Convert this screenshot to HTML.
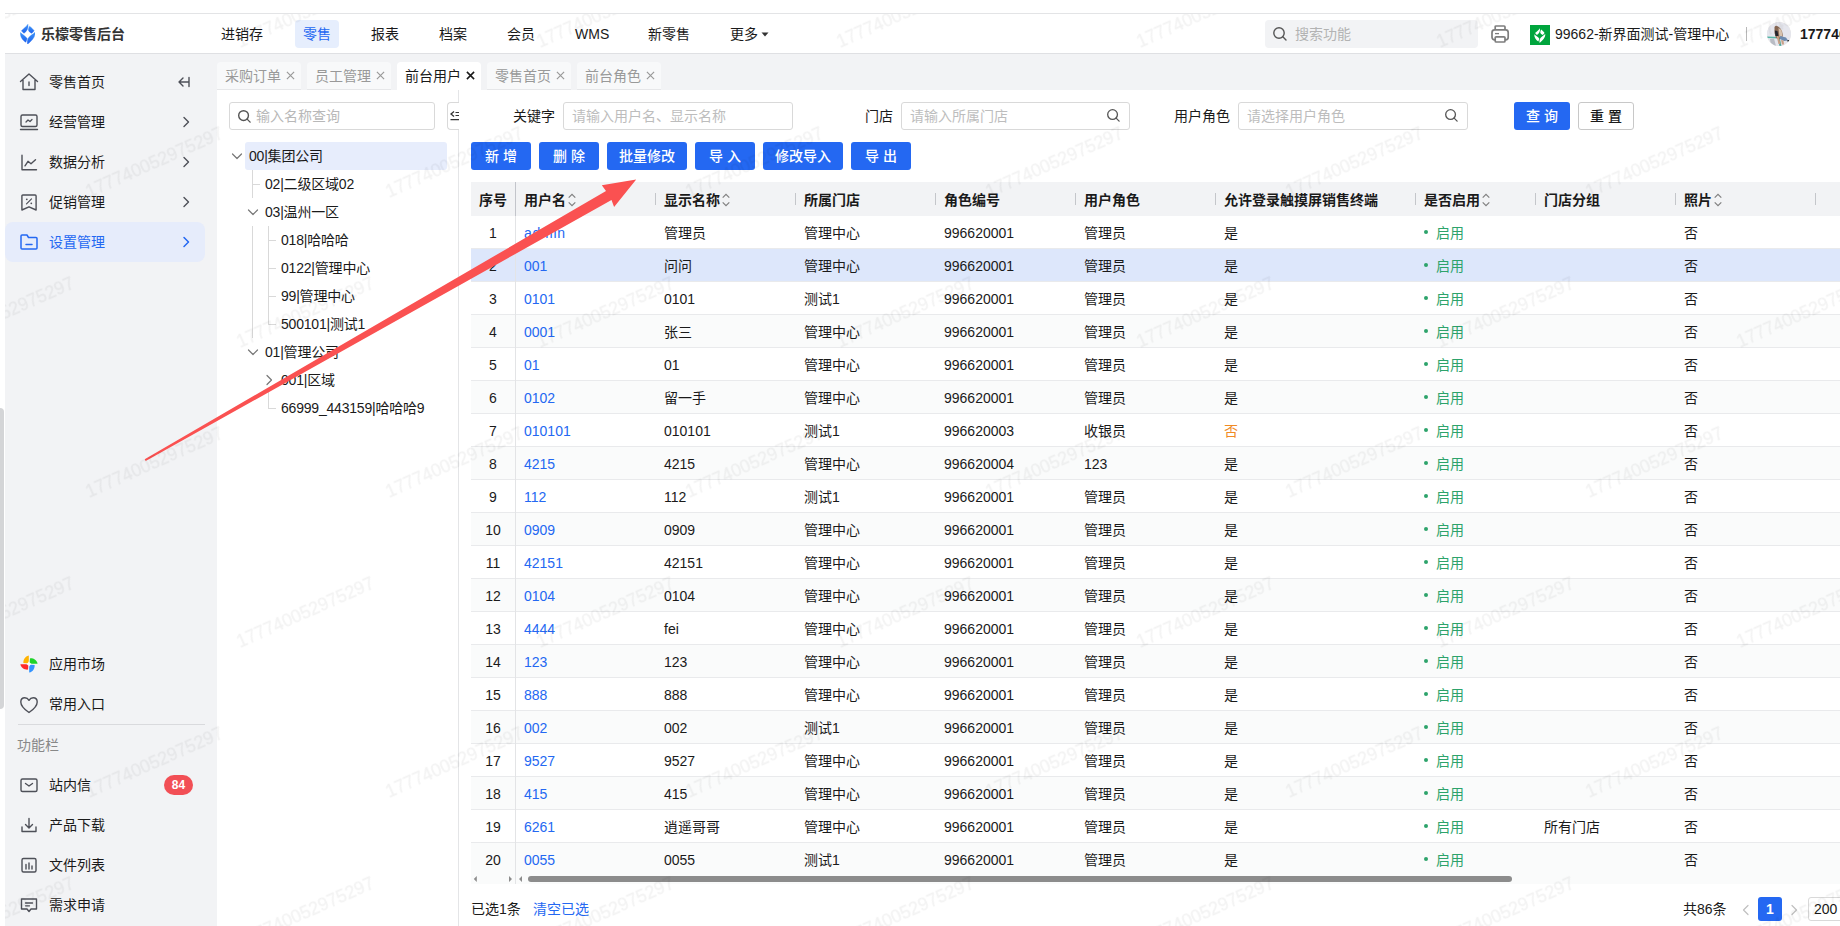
<!DOCTYPE html>
<html lang="zh-CN">
<head>
<meta charset="utf-8">
<title>乐檬零售后台</title>
<style>
*{box-sizing:border-box;margin:0;padding:0}
html,body{width:1840px;height:926px;overflow:hidden;background:#fff}
body{font-family:"Liberation Sans","Noto Sans CJK SC",sans-serif;font-size:14px;color:#1a1a1a;position:relative}
.abs{position:absolute}
svg{display:block}
/* top strip */
#topline{position:absolute;left:5px;top:13px;width:1835px;height:1px;background:#e3e4e6}
/* header */
#header{position:absolute;left:5px;top:14px;width:1835px;height:40px;background:#fff;border-bottom:1px solid #dfe0e3}
#logo{position:absolute;left:14.700px;top:9.800px}
#brand{position:absolute;left:36px;top:0;line-height:41px;font-size:14px;font-weight:700;color:#333;letter-spacing:0px}
.nav{position:absolute;top:0;line-height:41px;font-size:14px;color:#1a1a1a;white-space:nowrap}
.nav.act{top:6px;height:28px;line-height:29px;background:#e6eefd;color:#2468f2;border-radius:4px;padding:0 8px}
#hsearch{position:absolute;left:1260px;top:6px;width:213px;height:28px;background:#f2f3f5;border-radius:4px;line-height:29px;color:#b3b3b3;font-size:14px;padding-left:30px}
#hsearch svg{position:absolute;left:7px;top:6px}
#org{position:absolute;left:1550px;top:0;line-height:41px;font-size:14px;color:#1a1a1a;white-space:nowrap}
#orgico{position:absolute;left:1525px;top:11px;width:20px;height:20px;background:#00a53d}
#hdiv{position:absolute;left:1741px;top:13px;width:1px;height:14px;background:#b8b8b8}
#avatar{position:absolute;left:1762px;top:8px;width:24px;height:24px;border-radius:50%;overflow:hidden;background:#e9e3dc}
#uname{position:absolute;left:1795px;top:0;line-height:41px;font-size:14px;font-weight:700;color:#1a1a1a;white-space:nowrap}
/* sidebar */
#side{position:absolute;left:5px;top:54px;width:212px;height:872px;background:#f2f3f5}
.mi{position:absolute;left:0;width:200px;height:40px;line-height:41px;font-size:14px;color:#1a1a1a;padding-left:44px;white-space:nowrap}
.mi svg.ic{position:absolute;left:14px;top:10px}
.mi svg.chev{position:absolute;left:175px;top:14px}
.mi.act{background:#e6ecfb;border-radius:8px;color:#2468f2}
#sdiv{position:absolute;left:13px;top:670px;width:187px;height:1px;background:#d9dadd}
#sfn{position:absolute;left:12px;top:680px;font-size:14px;color:#888;line-height:22px}
#badge{position:absolute;left:159px;top:721px;width:29px;height:20px;border-radius:10px;background:#f24f55;color:#fff;font-size:12px;line-height:21px;text-align:center;font-weight:700}
#edgebar{position:absolute;left:0;top:408px;width:4px;height:301px;background:#d4d5d7;border-radius:0 4px 4px 0}
/* tabs */
#tabbar{position:absolute;left:217px;top:54px;width:1623px;height:36px;background:#f2f3f5}
.tab{position:absolute;top:8px;height:28px;width:84px;line-height:29px;font-size:14px;color:#999;background:#f8f9fa;border-radius:4px 4px 0 0;padding-left:8px;white-space:nowrap;border-bottom:1px solid #e6e7e9}
.tab.act{background:#fff;color:#1a1a1a;border-bottom:none}
.tab.act .x path{stroke-width:1.700}
.tab .x{position:absolute;left:68.500px;top:9px}
/* tree panel */
#tree{position:absolute;left:217px;top:90px;width:241px;height:836px;background:#fff}
#tsearch{position:absolute;left:12px;top:12px;width:206px;height:28px;border:1px solid #d9d9d9;border-radius:3px;line-height:26px;padding-left:26px;color:#b8b8b8;font-size:14px}
#tsearch svg{position:absolute;left:7px;top:6px}
#split{position:absolute;left:458px;top:90px;width:1px;height:836px;background:#e4e5e7}
#collapse{position:absolute;left:447px;top:102px;width:12px;height:28px;background:#fff;border:1px solid #d9d9d9;border-right:none;border-radius:4px 0 0 4px;overflow:hidden}
.tn{position:absolute;height:28px;line-height:29px;font-size:14px;color:#1a1a1a;white-space:nowrap;letter-spacing:-0.2px}
.tn.sel{background:#e7edfc;border-radius:3px}
.tl{position:absolute;background:#d9d9d9}
/* filters */
.flabel{position:absolute;top:102px;line-height:28px;font-size:14px;color:#1a1a1a;white-space:nowrap}
.finput{position:absolute;top:102px;height:28px;border:1px solid #d9d9d9;border-radius:3px;line-height:26px;padding-left:8px;color:#bdbdbd;font-size:14px;white-space:nowrap;background:#fff}
.finput svg{position:absolute;right:8px;top:5px}
.btn{position:absolute;height:28px;line-height:29px;border-radius:3px;background:#2468f2;color:#fff;font-size:14px;text-align:center;white-space:nowrap;font-weight:500}
.btn.plain{background:#fff;border:1px solid #c8c8c8;color:#1a1a1a;line-height:27px}
/* table */
#tbl{position:absolute;left:471px;top:182px;width:1369px;height:702px;overflow:hidden}
.thead{position:absolute;left:0;top:0;width:1369px;height:34px;background:#f2f3f5}
.th{position:absolute;top:0;height:34px;line-height:36px;font-weight:700;font-size:14px;color:#1a1a1a;padding-left:8px;white-space:nowrap}
.th .sep{position:absolute;left:-1px;top:11px;width:1px;height:12px;background:#c4c6ca}
.th .sort{display:inline-block;vertical-align:-2px;margin-left:2px}
.tr{position:absolute;left:0;width:1369px;height:33px;border-bottom:1px solid #e9eaec;background:#fff}
.tr.odd{background:#fafbfb}
.tr.sel{background:#dde7fb}
.td{position:absolute;top:0;height:32px;line-height:34px;font-size:14px;padding-left:8px;white-space:nowrap;color:#1a1a1a}
.td.idx{left:0;width:44px;text-align:center;padding:0}
.lnk{color:#2468f2}
.no{color:#f08a24}
.on{color:#2da36b}
.on b{display:inline-block;width:4px;height:4px;border-radius:50%;background:#2da36b;vertical-align:4px;margin-right:8px}
#idxline{position:absolute;left:515px;top:216px;width:1px;height:668px;background:#e3e4e6}
#idxline2{position:absolute;left:515px;top:182px;width:1px;height:34px;background:#c3c5cb}
/* scrollbar */
#sb{position:absolute;left:528px;top:876px;width:984px;height:6px;border-radius:3px;background:#8c8c8c}
/* footer */
.ft{position:absolute;top:897px;line-height:25px;font-size:14px;white-space:nowrap;color:#1a1a1a}
#pg1{position:absolute;left:1758px;top:897px;width:24px;height:24px;border-radius:3px;background:#2468f2;color:#fff;text-align:center;line-height:25px;font-size:14px;font-weight:700}
#pgsize{position:absolute;left:1808px;top:897px;width:60px;height:24px;border:1px solid #d9d9d9;border-radius:3px;line-height:23px;padding-left:5px;font-size:14px}
.wm{position:absolute;font-size:16px;color:rgba(0,0,0,0.06);transform:rotate(-30deg);transform-origin:left bottom;white-space:nowrap;pointer-events:none;letter-spacing:0.5px}
</style>
</head>
<body>
<div id="topline"></div>

<!-- HEADER -->
<div id="header">
  <svg id="logo" width="15.560" height="20.230" viewBox="250 200 400 520"><defs><linearGradient id="lg" x1="0" y1="0" x2="0" y2="1"><stop offset="0" stop-color="#3d92f6"/><stop offset="1" stop-color="#1c62ef"/></linearGradient></defs><g fill="url(#lg)" stroke="url(#lg)" stroke-width="10" stroke-linejoin="round"><path d="M455 205 C470 300 430 390 350 440 L285 375 C340 320 420 260 455 205Z"/><path d="M495 255 C540 290 590 335 615 375 L555 440 C510 420 470 390 465 345 C470 310 485 280 495 255Z"/><path d="M260 420 C320 480 400 520 435 575 L400 670 C320 620 250 530 260 420Z"/><path d="M640 410 C650 540 540 640 445 720 C430 650 440 590 480 540 C530 490 600 450 640 410Z"/></g></svg>
  <div id="brand">乐檬零售后台</div>
  <div class="nav" style="left:216px">进销存</div>
  <div class="nav act" style="left:290px">零售</div>
  <div class="nav" style="left:366px">报表</div>
  <div class="nav" style="left:434px">档案</div>
  <div class="nav" style="left:502px">会员</div>
  <div class="nav" style="left:570px">WMS</div>
  <div class="nav" style="left:643px">新零售</div>
  <div class="nav" style="left:725px">更多<svg style="display:inline-block;margin-left:3px;vertical-align:2.500px" width="8" height="5" viewBox="0 0 8 5"><path d="M0.500 0.500 L7.500 0.500 L4 4.500Z" fill="#333"/></svg></div>
  <div id="hsearch"><svg width="16" height="16" viewBox="0 0 16 16"><circle cx="7" cy="7" r="5.2" fill="none" stroke="#555" stroke-width="1.4"/><path d="M10.8 10.8 L14 14" stroke="#555" stroke-width="1.4" stroke-linecap="round"/></svg>搜索功能</div>
  <svg class="abs" style="left:1485px;top:10px" width="20" height="20" viewBox="0 0 20 20"><g fill="none" stroke="#7d7d7d" stroke-width="1.700" stroke-linejoin="round"><path d="M5.200 5.800 L5.200 2.900 Q5.200 2 6.100 2 L14.100 2 Q15 2 15 2.900 L15 5.800"/><rect x="2" y="5.800" width="16.200" height="10" rx="2.600"/><rect x="5.200" y="12.800" width="9.800" height="5.200" rx="1" fill="#fff"/><path d="M5 9.600 L9 9.600" stroke-width="1.300"/></g></svg>
  <div id="orgico"><svg style="position:absolute;left:4.200px;top:2.700px" width="11.600" height="15" viewBox="250 200 400 520"><g fill="#fff"><path d="M455 205 C470 300 430 390 350 440 L285 375 C340 320 420 260 455 205Z"/><path d="M495 255 C540 290 590 335 615 375 L555 440 C510 420 470 390 465 345 C470 310 485 280 495 255Z"/><path d="M260 420 C320 480 400 520 435 575 L400 670 C320 620 250 530 260 420Z"/><path d="M640 410 C650 540 540 640 445 720 C430 650 440 590 480 540 C530 490 600 450 640 410Z"/></g></svg></div>
  <div id="org">99662-新界面测试-管理中心</div>
  <div id="hdiv"></div>
  <div id="avatar"><svg width="24" height="24" viewBox="0 0 24 24"><rect width="24" height="24" fill="#e5e6ed"/><path d="M0 14.500 L12 15 L12 16.500 L0 16Z" fill="#56b5a6"/><path d="M10.500 15 L12.500 15 L14.500 24 L12.500 24Z" fill="#4aa89a"/><path d="M3 17 L7 16.500 L9 24 L4 24Z" fill="#b9bcc4"/><path d="M7.500 5 Q9 3 11 4.500 L13 6 L15 9 L16 14 L13 17 L9 16 L7.500 11Z" fill="#8a6a55"/><path d="M11.500 6 L14.500 8 L15.500 14 L12.500 15.500Z" fill="#d8c3ae"/><path d="M7.800 8.500 L10.500 9 L11.500 14.500 L8.500 14Z" fill="#22232c"/><path d="M13 14 L19 15.500 L21 18.500 L17 19 L13 17Z" fill="#6d8bb0"/><path d="M9.500 14 L11.500 14 L13.500 22 L11.500 22Z" fill="#c99f85"/><path d="M14 18 L16.500 18.500 L17 22.500 L15 22.500Z" fill="#c99f85"/><ellipse cx="21.500" cy="18.800" rx="1.300" ry="0.900" fill="#222"/></svg></div>
  <div id="uname">177740052975297</div>
</div>

<!-- SIDEBAR -->
<div id="side">
  <div class="mi" style="top:8px"><svg class="ic" width="20" height="20" viewBox="0 0 20 20"><path d="M1.5 9.5 L10 2 L18.500 9.5 M4 8 L4 17.500 L16 17.500 L16 8" fill="none" stroke="#4e5058" stroke-width="1.4" stroke-linejoin="round" stroke-linecap="round"/><path d="M10 10 L10 13.500" stroke="#4e5058" stroke-width="1.4" stroke-linecap="round"/></svg>零售首页<svg class="chev" style="left:172px;top:13px" width="14" height="14" viewBox="0 0 14 14"><path d="M6 3 L2 7 L6 11 M2 7 L12 7 M12 2.500 L12 11.500" fill="none" stroke="#4e5058" stroke-width="1.4" stroke-linecap="round" stroke-linejoin="round"/></svg></div>
  <div class="mi" style="top:48px"><svg class="ic" width="20" height="20" viewBox="0 0 20 20"><rect x="2" y="3" width="16" height="11.500" rx="1.500" fill="none" stroke="#4e5058" stroke-width="1.400"/><path d="M1.500 17.500 L18.500 17.500" stroke="#4e5058" stroke-width="1.400" stroke-linecap="round"/><path d="M7 10 L9 8 L11 9.500 L13 7.500" fill="none" stroke="#4e5058" stroke-width="1.300" stroke-linecap="round" stroke-linejoin="round"/></svg>经营管理<svg class="chev" width="12" height="12" viewBox="0 0 12 12"><path d="M4 1.500 L8.500 6 L4 10.500" fill="none" stroke="#4e5058" stroke-width="1.400" stroke-linecap="round" stroke-linejoin="round"/></svg></div>
  <div class="mi" style="top:88px"><svg class="ic" width="20" height="20" viewBox="0 0 20 20"><path d="M3 3.300 L3 17.800 L17.500 17.800" fill="none" stroke="#4e5058" stroke-width="1.400" stroke-linecap="round" stroke-linejoin="round"/><path d="M6 13.800 L9 9.300 L12 11.800 L16.500 7.800" fill="none" stroke="#4e5058" stroke-width="1.400" stroke-linecap="round" stroke-linejoin="round"/></svg>数据分析<svg class="chev" width="12" height="12" viewBox="0 0 12 12"><path d="M4 1.500 L8.500 6 L4 10.500" fill="none" stroke="#4e5058" stroke-width="1.400" stroke-linecap="round" stroke-linejoin="round"/></svg></div>
  <div class="mi" style="top:128px"><svg class="ic" width="20" height="20" viewBox="0 0 20 20"><path d="M2.900 4 Q2.900 3 3.900 3 L16.100 3 Q17.100 3 17.100 4 L17.100 18 L10 14.800 L2.900 18 Z" fill="none" stroke="#4e5058" stroke-width="1.400" stroke-linejoin="round"/><path d="M7.500 11.800 L12.500 6.800" stroke="#4e5058" stroke-width="1.200" stroke-linecap="round"/><circle cx="7.800" cy="7.300" r="0.900" fill="#4e5058"/><circle cx="12.300" cy="11.300" r="0.900" fill="#4e5058"/></svg>促销管理<svg class="chev" width="12" height="12" viewBox="0 0 12 12"><path d="M4 1.500 L8.500 6 L4 10.500" fill="none" stroke="#4e5058" stroke-width="1.400" stroke-linecap="round" stroke-linejoin="round"/></svg></div>
  <div class="mi act" style="top:168px"><svg class="ic" width="20" height="20" viewBox="0 0 20 20"><path d="M2 4 Q2 3 3 3 L8 3 L9.500 5.500 L17 5.500 Q18 5.500 18 6.500 L18 16 Q18 17 17 17 L3 17 Q2 17 2 16 Z" fill="none" stroke="#2468f2" stroke-width="1.500" stroke-linejoin="round"/><path d="M7 12.500 L13 12.500" stroke="#2468f2" stroke-width="1.500" stroke-linecap="round"/></svg>设置管理<svg class="chev" width="12" height="12" viewBox="0 0 12 12"><path d="M4 1.500 L8.500 6 L4 10.500" fill="none" stroke="#2468f2" stroke-width="1.500" stroke-linecap="round" stroke-linejoin="round"/></svg></div>

  <div class="mi" style="top:590px"><svg class="ic" width="20" height="20" viewBox="-10 -10 20 20"><circle r="2.200" fill="#fff" fill-opacity="0.900"/><path d="M-0.200 -8.600 C-4 -8 -6 -4 -5.600 -1 L-1.800 -0.700 C-0.600 -1.400 -0.200 -2.500 -0.200 -3.600 Z" fill="#ffb300"/><path d="M-0.200 -8.600 C-4 -8 -6 -4 -5.600 -1 L-1.800 -0.700 C-0.600 -1.400 -0.200 -2.500 -0.200 -3.600 Z" fill="#20d32a" transform="rotate(90)"/><path d="M-0.200 -8.600 C-4 -8 -6 -4 -5.600 -1 L-1.800 -0.700 C-0.600 -1.400 -0.200 -2.500 -0.200 -3.600 Z" fill="#3393ff" transform="rotate(180)"/><path d="M-0.200 -8.600 C-4 -8 -6 -4 -5.600 -1 L-1.800 -0.700 C-0.600 -1.400 -0.200 -2.500 -0.200 -3.600 Z" fill="#ff2a2a" transform="rotate(270)"/></svg>应用市场</div>
  <div class="mi" style="top:630px"><svg class="ic" width="20" height="20" viewBox="0 0 20 20"><path d="M10 18.500 Q1.800 13 1.800 8 Q1.800 3.800 5.800 3.800 Q8.500 3.800 10 6.300 Q11.500 3.800 14.200 3.800 Q18.200 3.800 18.200 8 Q18.200 13 10 18.500Z" fill="none" stroke="#4e5058" stroke-width="1.400" stroke-linejoin="round"/></svg>常用入口</div>
  <div id="sdiv"></div>
  <div id="sfn">功能栏</div>
  <div class="mi" style="top:711px"><svg class="ic" width="20" height="20" viewBox="0 0 20 20"><rect x="2" y="4" width="16" height="12.500" rx="1.500" fill="none" stroke="#4e5058" stroke-width="1.400"/><path d="M6.500 8.500 L10 11 L13.500 8.500" fill="none" stroke="#4e5058" stroke-width="1.400" stroke-linecap="round" stroke-linejoin="round"/></svg>站内信</div>
  <div id="badge">84</div>
  <div class="mi" style="top:751px"><svg class="ic" width="20" height="20" viewBox="0 0 20 20"><path d="M10 3.500 L10 12.500 M6.500 9.500 L10 13 L13.500 9.500" fill="none" stroke="#4e5058" stroke-width="1.400" stroke-linecap="round" stroke-linejoin="round"/><path d="M3 12 L3 16.500 L17 16.500 L17 12" fill="none" stroke="#4e5058" stroke-width="1.400" stroke-linecap="round" stroke-linejoin="round"/></svg>产品下载</div>
  <div class="mi" style="top:791px"><svg class="ic" width="20" height="20" viewBox="0 0 20 20"><rect x="3" y="3.500" width="14" height="13.500" rx="1.500" fill="none" stroke="#4e5058" stroke-width="1.400"/><path d="M7 9.500 L7 14 M10 8 L10 14 M13 11 L13 14" stroke="#4e5058" stroke-width="1.400" stroke-linecap="round"/></svg>文件列表</div>
  <div class="mi" style="top:831px"><svg class="ic" width="20" height="20" viewBox="0 0 20 20"><path d="M2.500 4 L17.500 4 L17.500 14 L12 14 L10 16.500 L8 14 L2.500 14 Z" fill="none" stroke="#4e5058" stroke-width="1.400" stroke-linejoin="round"/><path d="M6.500 8 L13.500 8 M6.500 10.800 L10.500 10.800" stroke="#4e5058" stroke-width="1.300" stroke-linecap="round"/></svg>需求申请</div>

</div>
<div id="edgebar"></div>

<!-- TABS -->
<div id="tabbar">
  <div class="tab" style="left:0">采购订单<svg class="x" width="9" height="9" viewBox="0 0 10 10"><path d="M1 1 L9 9 M9 1 L1 9" fill="none" stroke="currentColor" stroke-width="1.300"/></svg></div>
  <div class="tab" style="left:90px">员工管理<svg class="x" width="9" height="9" viewBox="0 0 10 10"><path d="M1 1 L9 9 M9 1 L1 9" fill="none" stroke="currentColor" stroke-width="1.300"/></svg></div>
  <div class="tab act" style="left:180px">前台用户<svg class="x" width="9" height="9" viewBox="0 0 10 10"><path d="M1 1 L9 9 M9 1 L1 9" fill="none" stroke="currentColor" stroke-width="1.300"/></svg></div>
  <div class="tab" style="left:270px">零售首页<svg class="x" width="9" height="9" viewBox="0 0 10 10"><path d="M1 1 L9 9 M9 1 L1 9" fill="none" stroke="currentColor" stroke-width="1.300"/></svg></div>
  <div class="tab" style="left:360px">前台角色<svg class="x" width="9" height="9" viewBox="0 0 10 10"><path d="M1 1 L9 9 M9 1 L1 9" fill="none" stroke="currentColor" stroke-width="1.300"/></svg></div>
</div>

<!-- TREE -->
<div id="tree">
  <div id="tsearch"><svg width="15" height="15" viewBox="0 0 16 16"><circle cx="7" cy="7" r="5.200" fill="none" stroke="#555" stroke-width="1.500"/><path d="M10.800 10.800 L14 14" stroke="#555" stroke-width="1.500" stroke-linecap="round"/></svg>输入名称查询</div>
  <i class="tl" style="left:35px;top:80px;width:1px;height:168px"></i>
  <i class="tl" style="left:35px;top:94px;width:8px;height:1px"></i>
  <i class="tl" style="left:34px;top:108px;width:3px;height:28px;background:#fff"></i>
  <i class="tl" style="left:51px;top:136px;width:1px;height:98px"></i>
  <i class="tl" style="left:51px;top:150px;width:8px;height:1px"></i>
  <i class="tl" style="left:51px;top:178px;width:8px;height:1px"></i>
  <i class="tl" style="left:51px;top:206px;width:8px;height:1px"></i>
  <i class="tl" style="left:51px;top:234px;width:8px;height:1px"></i>
  <i class="tl" style="left:51px;top:302px;width:1px;height:16px"></i>
  <i class="tl" style="left:51px;top:318px;width:8px;height:1px"></i>
  <div class="tn sel" style="left:28px;top:52px;width:202px;padding-left:4px">00|集团公司</div>
  <div class="tn" style="left:48px;top:80px">02|二级区域02</div>
  <div class="tn" style="left:48px;top:108px">03|温州一区</div>
  <div class="tn" style="left:64px;top:136px">018|哈哈哈</div>
  <div class="tn" style="left:64px;top:164px">0122|管理中心</div>
  <div class="tn" style="left:64px;top:192px">99|管理中心</div>
  <div class="tn" style="left:64px;top:220px">500101|测试1</div>
  <div class="tn" style="left:48px;top:248px">01|管理公司</div>
  <div class="tn" style="left:64px;top:276px">001|区域</div>
  <div class="tn" style="left:64px;top:304px">66999_443159|哈哈哈9</div>
  <svg class="abs" style="left:14px;top:60px" width="12" height="12" viewBox="0 0 12 12"><path d="M1.500 4 L6 8.500 L10.500 4" fill="none" stroke="#777" stroke-width="1.200" stroke-linecap="round" stroke-linejoin="round"/></svg>
  <svg class="abs" style="left:30px;top:116px;background:#fff" width="12" height="12" viewBox="0 0 12 12"><path d="M1.500 4 L6 8.500 L10.500 4" fill="none" stroke="#777" stroke-width="1.200" stroke-linecap="round" stroke-linejoin="round"/></svg>
  <svg class="abs" style="left:30px;top:256px;background:#fff" width="12" height="12" viewBox="0 0 12 12"><path d="M1.500 4 L6 8.500 L10.500 4" fill="none" stroke="#777" stroke-width="1.200" stroke-linecap="round" stroke-linejoin="round"/></svg>
  <svg class="abs" style="left:46px;top:284px;background:#fff" width="12" height="12" viewBox="0 0 12 12"><path d="M4 1.500 L8.500 6 L4 10.500" fill="none" stroke="#777" stroke-width="1.200" stroke-linecap="round" stroke-linejoin="round"/></svg>

</div>
<div id="split"></div>
<div id="collapse"><svg style="position:absolute;left:2px;top:8px" width="12" height="11" viewBox="0 0 12 11"><path d="M4 0.500 L1 3 L4 5.500" fill="none" stroke="#333" stroke-width="1.300"/><path d="M5.500 1.500 L12 1.500 M5.500 4.500 L12 4.500 M0.500 8.700 L12 8.700" stroke="#333" stroke-width="1.200"/></svg></div>

<!-- MAIN -->
<div class="flabel" style="left:513px">关键字</div>
<div class="finput" style="left:563px;width:230px">请输入用户名、显示名称</div>
<div class="flabel" style="left:865px">门店</div>
<div class="finput" style="left:901px;width:229px">请输入所属门店<svg width="15" height="15" viewBox="0 0 16 16"><circle cx="7" cy="7" r="5.200" fill="none" stroke="#555" stroke-width="1.400"/><path d="M10.800 10.800 L14 14" stroke="#555" stroke-width="1.400" stroke-linecap="round"/></svg></div>
<div class="flabel" style="left:1174px">用户角色</div>
<div class="finput" style="left:1238px;width:230px">请选择用户角色<svg width="15" height="15" viewBox="0 0 16 16"><circle cx="7" cy="7" r="5.200" fill="none" stroke="#555" stroke-width="1.400"/><path d="M10.800 10.800 L14 14" stroke="#555" stroke-width="1.400" stroke-linecap="round"/></svg></div>
<div class="btn" style="left:1514px;top:102px;width:56px">查 询</div>
<div class="btn plain" style="left:1578px;top:102px;width:56px">重 置</div>

<div class="btn" style="left:471px;top:142px;width:60px">新 增</div>
<div class="btn" style="left:539px;top:142px;width:60px">删 除</div>
<div class="btn" style="left:607px;top:142px;width:80px">批量修改</div>
<div class="btn" style="left:695px;top:142px;width:60px">导 入</div>
<div class="btn" style="left:763px;top:142px;width:80px">修改导入</div>
<div class="btn" style="left:851px;top:142px;width:60px">导 出</div>


<div id="tbl">
<div class="thead">
<div class="th" style="left:0;width:44px;text-align:center;padding:0">序号</div>
<div class="th" style="left:45px">用户名<svg class="sort" width="8" height="14" viewBox="0 0 8 14"><path d="M0.7 4.7 L4 1.300 L7.300 4.700 M0.700 9.300 L4 12.700 L7.300 9.300" fill="none" stroke="#808080" stroke-width="1.200"/></svg></div>
<div class="th" style="left:185px"><i class="sep"></i>显示名称<svg class="sort" width="8" height="14" viewBox="0 0 8 14"><path d="M0.7 4.7 L4 1.300 L7.300 4.700 M0.700 9.300 L4 12.700 L7.300 9.300" fill="none" stroke="#808080" stroke-width="1.200"/></svg></div>
<div class="th" style="left:325px"><i class="sep"></i>所属门店</div>
<div class="th" style="left:465px"><i class="sep"></i>角色编号</div>
<div class="th" style="left:605px"><i class="sep"></i>用户角色</div>
<div class="th" style="left:745px"><i class="sep"></i>允许登录触摸屏销售终端</div>
<div class="th" style="left:945px"><i class="sep"></i>是否启用<svg class="sort" width="8" height="14" viewBox="0 0 8 14"><path d="M0.7 4.7 L4 1.300 L7.300 4.700 M0.700 9.300 L4 12.700 L7.300 9.300" fill="none" stroke="#808080" stroke-width="1.200"/></svg></div>
<div class="th" style="left:1065px"><i class="sep"></i>门店分组</div>
<div class="th" style="left:1205px"><i class="sep"></i>照片<svg class="sort" width="8" height="14" viewBox="0 0 8 14"><path d="M0.7 4.7 L4 1.300 L7.300 4.700 M0.700 9.300 L4 12.700 L7.300 9.300" fill="none" stroke="#808080" stroke-width="1.200"/></svg></div>
<div class="th" style="left:1345px"><i class="sep"></i></div>
</div>
<div class="tr" style="top:34px">
<div class="td idx">1</div>
<div class="td" style="left:45px"><span class="lnk" style="letter-spacing:0.75px">admin</span></div>
<div class="td" style="left:185px">管理员</div>
<div class="td" style="left:325px">管理中心</div>
<div class="td" style="left:465px">996620001</div>
<div class="td" style="left:605px">管理员</div>
<div class="td" style="left:745px">是</div>
<div class="td" style="left:945px"><span class="on"><b></b>启用</span></div>
<div class="td" style="left:1065px"></div>
<div class="td" style="left:1205px">否</div>
</div>
<div class="tr sel" style="top:67px">
<div class="td idx">2</div>
<div class="td" style="left:45px"><span class="lnk">001</span></div>
<div class="td" style="left:185px">问问</div>
<div class="td" style="left:325px">管理中心</div>
<div class="td" style="left:465px">996620001</div>
<div class="td" style="left:605px">管理员</div>
<div class="td" style="left:745px">是</div>
<div class="td" style="left:945px"><span class="on"><b></b>启用</span></div>
<div class="td" style="left:1065px"></div>
<div class="td" style="left:1205px">否</div>
</div>
<div class="tr" style="top:100px">
<div class="td idx">3</div>
<div class="td" style="left:45px"><span class="lnk">0101</span></div>
<div class="td" style="left:185px">0101</div>
<div class="td" style="left:325px">测试1</div>
<div class="td" style="left:465px">996620001</div>
<div class="td" style="left:605px">管理员</div>
<div class="td" style="left:745px">是</div>
<div class="td" style="left:945px"><span class="on"><b></b>启用</span></div>
<div class="td" style="left:1065px"></div>
<div class="td" style="left:1205px">否</div>
</div>
<div class="tr odd" style="top:133px">
<div class="td idx">4</div>
<div class="td" style="left:45px"><span class="lnk">0001</span></div>
<div class="td" style="left:185px">张三</div>
<div class="td" style="left:325px">管理中心</div>
<div class="td" style="left:465px">996620001</div>
<div class="td" style="left:605px">管理员</div>
<div class="td" style="left:745px">是</div>
<div class="td" style="left:945px"><span class="on"><b></b>启用</span></div>
<div class="td" style="left:1065px"></div>
<div class="td" style="left:1205px">否</div>
</div>
<div class="tr" style="top:166px">
<div class="td idx">5</div>
<div class="td" style="left:45px"><span class="lnk">01</span></div>
<div class="td" style="left:185px">01</div>
<div class="td" style="left:325px">管理中心</div>
<div class="td" style="left:465px">996620001</div>
<div class="td" style="left:605px">管理员</div>
<div class="td" style="left:745px">是</div>
<div class="td" style="left:945px"><span class="on"><b></b>启用</span></div>
<div class="td" style="left:1065px"></div>
<div class="td" style="left:1205px">否</div>
</div>
<div class="tr odd" style="top:199px">
<div class="td idx">6</div>
<div class="td" style="left:45px"><span class="lnk">0102</span></div>
<div class="td" style="left:185px">留一手</div>
<div class="td" style="left:325px">管理中心</div>
<div class="td" style="left:465px">996620001</div>
<div class="td" style="left:605px">管理员</div>
<div class="td" style="left:745px">是</div>
<div class="td" style="left:945px"><span class="on"><b></b>启用</span></div>
<div class="td" style="left:1065px"></div>
<div class="td" style="left:1205px">否</div>
</div>
<div class="tr" style="top:232px">
<div class="td idx">7</div>
<div class="td" style="left:45px"><span class="lnk">010101</span></div>
<div class="td" style="left:185px">010101</div>
<div class="td" style="left:325px">测试1</div>
<div class="td" style="left:465px">996620003</div>
<div class="td" style="left:605px">收银员</div>
<div class="td" style="left:745px"><span class="no">否</span></div>
<div class="td" style="left:945px"><span class="on"><b></b>启用</span></div>
<div class="td" style="left:1065px"></div>
<div class="td" style="left:1205px">否</div>
</div>
<div class="tr odd" style="top:265px">
<div class="td idx">8</div>
<div class="td" style="left:45px"><span class="lnk">4215</span></div>
<div class="td" style="left:185px">4215</div>
<div class="td" style="left:325px">管理中心</div>
<div class="td" style="left:465px">996620004</div>
<div class="td" style="left:605px">123</div>
<div class="td" style="left:745px">是</div>
<div class="td" style="left:945px"><span class="on"><b></b>启用</span></div>
<div class="td" style="left:1065px"></div>
<div class="td" style="left:1205px">否</div>
</div>
<div class="tr" style="top:298px">
<div class="td idx">9</div>
<div class="td" style="left:45px"><span class="lnk">112</span></div>
<div class="td" style="left:185px">112</div>
<div class="td" style="left:325px">测试1</div>
<div class="td" style="left:465px">996620001</div>
<div class="td" style="left:605px">管理员</div>
<div class="td" style="left:745px">是</div>
<div class="td" style="left:945px"><span class="on"><b></b>启用</span></div>
<div class="td" style="left:1065px"></div>
<div class="td" style="left:1205px">否</div>
</div>
<div class="tr odd" style="top:331px">
<div class="td idx">10</div>
<div class="td" style="left:45px"><span class="lnk">0909</span></div>
<div class="td" style="left:185px">0909</div>
<div class="td" style="left:325px">管理中心</div>
<div class="td" style="left:465px">996620001</div>
<div class="td" style="left:605px">管理员</div>
<div class="td" style="left:745px">是</div>
<div class="td" style="left:945px"><span class="on"><b></b>启用</span></div>
<div class="td" style="left:1065px"></div>
<div class="td" style="left:1205px">否</div>
</div>
<div class="tr" style="top:364px">
<div class="td idx">11</div>
<div class="td" style="left:45px"><span class="lnk">42151</span></div>
<div class="td" style="left:185px">42151</div>
<div class="td" style="left:325px">管理中心</div>
<div class="td" style="left:465px">996620001</div>
<div class="td" style="left:605px">管理员</div>
<div class="td" style="left:745px">是</div>
<div class="td" style="left:945px"><span class="on"><b></b>启用</span></div>
<div class="td" style="left:1065px"></div>
<div class="td" style="left:1205px">否</div>
</div>
<div class="tr odd" style="top:397px">
<div class="td idx">12</div>
<div class="td" style="left:45px"><span class="lnk">0104</span></div>
<div class="td" style="left:185px">0104</div>
<div class="td" style="left:325px">管理中心</div>
<div class="td" style="left:465px">996620001</div>
<div class="td" style="left:605px">管理员</div>
<div class="td" style="left:745px">是</div>
<div class="td" style="left:945px"><span class="on"><b></b>启用</span></div>
<div class="td" style="left:1065px"></div>
<div class="td" style="left:1205px">否</div>
</div>
<div class="tr" style="top:430px">
<div class="td idx">13</div>
<div class="td" style="left:45px"><span class="lnk">4444</span></div>
<div class="td" style="left:185px">fei</div>
<div class="td" style="left:325px">管理中心</div>
<div class="td" style="left:465px">996620001</div>
<div class="td" style="left:605px">管理员</div>
<div class="td" style="left:745px">是</div>
<div class="td" style="left:945px"><span class="on"><b></b>启用</span></div>
<div class="td" style="left:1065px"></div>
<div class="td" style="left:1205px">否</div>
</div>
<div class="tr odd" style="top:463px">
<div class="td idx">14</div>
<div class="td" style="left:45px"><span class="lnk">123</span></div>
<div class="td" style="left:185px">123</div>
<div class="td" style="left:325px">管理中心</div>
<div class="td" style="left:465px">996620001</div>
<div class="td" style="left:605px">管理员</div>
<div class="td" style="left:745px">是</div>
<div class="td" style="left:945px"><span class="on"><b></b>启用</span></div>
<div class="td" style="left:1065px"></div>
<div class="td" style="left:1205px">否</div>
</div>
<div class="tr" style="top:496px">
<div class="td idx">15</div>
<div class="td" style="left:45px"><span class="lnk">888</span></div>
<div class="td" style="left:185px">888</div>
<div class="td" style="left:325px">管理中心</div>
<div class="td" style="left:465px">996620001</div>
<div class="td" style="left:605px">管理员</div>
<div class="td" style="left:745px">是</div>
<div class="td" style="left:945px"><span class="on"><b></b>启用</span></div>
<div class="td" style="left:1065px"></div>
<div class="td" style="left:1205px">否</div>
</div>
<div class="tr odd" style="top:529px">
<div class="td idx">16</div>
<div class="td" style="left:45px"><span class="lnk">002</span></div>
<div class="td" style="left:185px">002</div>
<div class="td" style="left:325px">测试1</div>
<div class="td" style="left:465px">996620001</div>
<div class="td" style="left:605px">管理员</div>
<div class="td" style="left:745px">是</div>
<div class="td" style="left:945px"><span class="on"><b></b>启用</span></div>
<div class="td" style="left:1065px"></div>
<div class="td" style="left:1205px">否</div>
</div>
<div class="tr" style="top:562px">
<div class="td idx">17</div>
<div class="td" style="left:45px"><span class="lnk">9527</span></div>
<div class="td" style="left:185px">9527</div>
<div class="td" style="left:325px">管理中心</div>
<div class="td" style="left:465px">996620001</div>
<div class="td" style="left:605px">管理员</div>
<div class="td" style="left:745px">是</div>
<div class="td" style="left:945px"><span class="on"><b></b>启用</span></div>
<div class="td" style="left:1065px"></div>
<div class="td" style="left:1205px">否</div>
</div>
<div class="tr odd" style="top:595px">
<div class="td idx">18</div>
<div class="td" style="left:45px"><span class="lnk">415</span></div>
<div class="td" style="left:185px">415</div>
<div class="td" style="left:325px">管理中心</div>
<div class="td" style="left:465px">996620001</div>
<div class="td" style="left:605px">管理员</div>
<div class="td" style="left:745px">是</div>
<div class="td" style="left:945px"><span class="on"><b></b>启用</span></div>
<div class="td" style="left:1065px"></div>
<div class="td" style="left:1205px">否</div>
</div>
<div class="tr" style="top:628px">
<div class="td idx">19</div>
<div class="td" style="left:45px"><span class="lnk">6261</span></div>
<div class="td" style="left:185px">逍遥哥哥</div>
<div class="td" style="left:325px">管理中心</div>
<div class="td" style="left:465px">996620001</div>
<div class="td" style="left:605px">管理员</div>
<div class="td" style="left:745px">是</div>
<div class="td" style="left:945px"><span class="on"><b></b>启用</span></div>
<div class="td" style="left:1065px">所有门店</div>
<div class="td" style="left:1205px">否</div>
</div>
<div class="tr odd" style="top:661px;height:42px;border-bottom:none">
<div class="td idx">20</div>
<div class="td" style="left:45px"><span class="lnk">0055</span></div>
<div class="td" style="left:185px">0055</div>
<div class="td" style="left:325px">测试1</div>
<div class="td" style="left:465px">996620001</div>
<div class="td" style="left:605px">管理员</div>
<div class="td" style="left:745px">是</div>
<div class="td" style="left:945px"><span class="on"><b></b>启用</span></div>
<div class="td" style="left:1065px"></div>
<div class="td" style="left:1205px">否</div>
</div>
</div>
<div id="idxline"></div><div id="idxline2"></div>
<div id="sb"></div>
<svg class="abs" style="left:471px;top:875px" width="56" height="8" viewBox="0 0 56 8"><path d="M2.800 4 L5.800 1 L5.800 7Z M41 4 L38 1 L38 7Z M48 4 L51 1 L51 7Z" fill="#8c8c8c"/></svg>

<div class="ft" style="left:471px">已选1条</div>
<div class="ft" style="left:533px;color:#2468f2">清空已选</div>
<div class="ft" style="left:1683px">共86条</div>
<svg class="abs" style="left:1740px;top:903.500px" width="12" height="12" viewBox="0 0 12 12"><path d="M8 1.500 L3.500 6 L8 10.500" fill="none" stroke="#c0c0c0" stroke-width="1.200" stroke-linecap="round" stroke-linejoin="round"/></svg>
<div id="pg1">1</div>
<svg class="abs" style="left:1788px;top:903.500px" width="12" height="12" viewBox="0 0 12 12"><path d="M4 1.500 L8.500 6 L4 10.500" fill="none" stroke="#c0c0c0" stroke-width="1.200" stroke-linecap="round" stroke-linejoin="round"/></svg>
<div id="pgsize">200</div>
<svg class="abs" style="left:5px;top:14px;pointer-events:none;z-index:50" width="1835" height="912" viewBox="5 14 1835 912"><g font-family="Liberation Sans, sans-serif" font-size="17.800" fill="#000" stroke="#000" stroke-width="0.400" opacity="0.05">
<text transform="translate(-60,48) rotate(-24)">177740052975297</text>
<text transform="translate(-211,198) rotate(-24)">177740052975297</text>
<text transform="translate(-60,348) rotate(-24)">177740052975297</text>
<text transform="translate(-211,498) rotate(-24)">177740052975297</text>
<text transform="translate(-60,648) rotate(-24)">177740052975297</text>
<text transform="translate(-211,798) rotate(-24)">177740052975297</text>
<text transform="translate(-60,948) rotate(-24)">177740052975297</text>
<text transform="translate(-211,1098) rotate(-24)">177740052975297</text>
<text transform="translate(240,48) rotate(-24)">177740052975297</text>
<text transform="translate(89,198) rotate(-24)">177740052975297</text>
<text transform="translate(240,348) rotate(-24)">177740052975297</text>
<text transform="translate(89,498) rotate(-24)">177740052975297</text>
<text transform="translate(240,648) rotate(-24)">177740052975297</text>
<text transform="translate(89,798) rotate(-24)">177740052975297</text>
<text transform="translate(240,948) rotate(-24)">177740052975297</text>
<text transform="translate(89,1098) rotate(-24)">177740052975297</text>
<text transform="translate(540,48) rotate(-24)">177740052975297</text>
<text transform="translate(389,198) rotate(-24)">177740052975297</text>
<text transform="translate(540,348) rotate(-24)">177740052975297</text>
<text transform="translate(389,498) rotate(-24)">177740052975297</text>
<text transform="translate(540,648) rotate(-24)">177740052975297</text>
<text transform="translate(389,798) rotate(-24)">177740052975297</text>
<text transform="translate(540,948) rotate(-24)">177740052975297</text>
<text transform="translate(389,1098) rotate(-24)">177740052975297</text>
<text transform="translate(840,48) rotate(-24)">177740052975297</text>
<text transform="translate(689,198) rotate(-24)">177740052975297</text>
<text transform="translate(840,348) rotate(-24)">177740052975297</text>
<text transform="translate(689,498) rotate(-24)">177740052975297</text>
<text transform="translate(840,648) rotate(-24)">177740052975297</text>
<text transform="translate(689,798) rotate(-24)">177740052975297</text>
<text transform="translate(840,948) rotate(-24)">177740052975297</text>
<text transform="translate(689,1098) rotate(-24)">177740052975297</text>
<text transform="translate(1140,48) rotate(-24)">177740052975297</text>
<text transform="translate(989,198) rotate(-24)">177740052975297</text>
<text transform="translate(1140,348) rotate(-24)">177740052975297</text>
<text transform="translate(989,498) rotate(-24)">177740052975297</text>
<text transform="translate(1140,648) rotate(-24)">177740052975297</text>
<text transform="translate(989,798) rotate(-24)">177740052975297</text>
<text transform="translate(1140,948) rotate(-24)">177740052975297</text>
<text transform="translate(989,1098) rotate(-24)">177740052975297</text>
<text transform="translate(1440,48) rotate(-24)">177740052975297</text>
<text transform="translate(1289,198) rotate(-24)">177740052975297</text>
<text transform="translate(1440,348) rotate(-24)">177740052975297</text>
<text transform="translate(1289,498) rotate(-24)">177740052975297</text>
<text transform="translate(1440,648) rotate(-24)">177740052975297</text>
<text transform="translate(1289,798) rotate(-24)">177740052975297</text>
<text transform="translate(1440,948) rotate(-24)">177740052975297</text>
<text transform="translate(1289,1098) rotate(-24)">177740052975297</text>
<text transform="translate(1740,48) rotate(-24)">177740052975297</text>
<text transform="translate(1589,198) rotate(-24)">177740052975297</text>
<text transform="translate(1740,348) rotate(-24)">177740052975297</text>
<text transform="translate(1589,498) rotate(-24)">177740052975297</text>
<text transform="translate(1740,648) rotate(-24)">177740052975297</text>
<text transform="translate(1589,798) rotate(-24)">177740052975297</text>
<text transform="translate(1740,948) rotate(-24)">177740052975297</text>
<text transform="translate(1589,1098) rotate(-24)">177740052975297</text>
<text transform="translate(2040,48) rotate(-24)">177740052975297</text>
<text transform="translate(1889,198) rotate(-24)">177740052975297</text>
<text transform="translate(2040,348) rotate(-24)">177740052975297</text>
<text transform="translate(1889,498) rotate(-24)">177740052975297</text>
<text transform="translate(2040,648) rotate(-24)">177740052975297</text>
<text transform="translate(1889,798) rotate(-24)">177740052975297</text>
<text transform="translate(2040,948) rotate(-24)">177740052975297</text>
<text transform="translate(1889,1098) rotate(-24)">177740052975297</text>
</g></svg>
<!-- red annotation arrow -->
<svg class="abs" style="left:0;top:0;pointer-events:none" width="1840" height="926" viewBox="0 0 1840 926"><polygon points="144.700,459.300 145.700,461.100 611.500,200.100 614.100,206.900 636.200,179.400 601.800,185.200 606,191.100" fill="#fa5151"/></svg>

</body>
</html>
